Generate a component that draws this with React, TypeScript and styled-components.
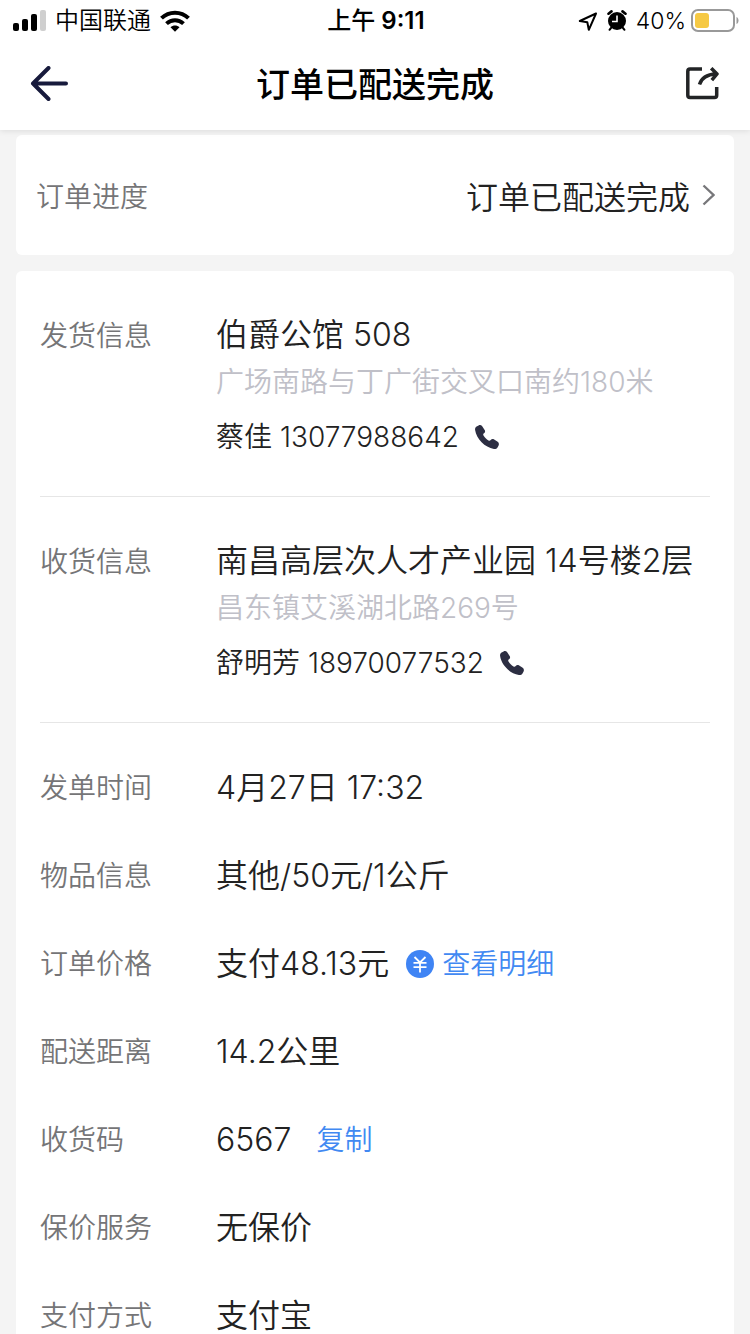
import React from "react";
import styled, { createGlobalStyle } from "styled-components";

const GlobalStyle = createGlobalStyle`
  * { box-sizing: border-box; }
  body {
    margin: 0;
    background: #f4f4f4;
    color: #222;
    font-family: Inter, "Noto Sans CJK SC", sans-serif;
    font-weight: 350;
  }
  button {
    margin: 0;
    padding: 0;
    border: 0;
    background: none;
    color: inherit;
    font: inherit;
    cursor: pointer;
  }
  svg { display: block; flex: none; }
  dl, dd, h1, p { margin: 0; }
`;

const Screen = styled.div`
  display: flex;
  flex-direction: column;
  height: 100vh;
`;

const Top = styled.header`
  flex: none;
  background: #fff;
  color: #000;
  box-shadow: 0 1px 6px rgba(0, 0, 0, 0.1);
  z-index: 1;
`;

const StatusBar = styled.div`
  display: grid;
  grid-template-columns: 1fr auto 1fr;
  align-items: center;
  height: 40px;
  padding: 0 11px 0 13px;
  font-size: 24px;
  line-height: 42px;
`;

const StatusGroup = styled.div<{ $end?: boolean }>`
  display: flex;
  align-items: center;
  justify-content: ${(p) => (p.$end ? "flex-end" : "flex-start")};
  gap: 9px;
`;

const Battery = styled.span`
  display: flex;
  align-items: center;
  gap: 5px;
`;

const Percent = styled.span`
  font-size: 23px;
`;

const Clock = styled.time`
  font-weight: 600;
`;

const Meridiem = styled.span`
  font-weight: 500;
`;

const NavBar = styled.nav`
  display: grid;
  grid-template-columns: 1fr auto 1fr;
  align-items: center;
  height: 90px;
  padding: 0 30px;
`;

const NavButton = styled.button<{ $end?: boolean }>`
  justify-self: ${(p) => (p.$end ? "end" : "start")};
  color: ${(p) => (p.$end ? "#222426" : "#171a3c")};
`;

const Title = styled.h1`
  font-size: 34px;
  font-weight: 500;
  line-height: 50px;
`;

const Content = styled.main`
  flex: 1;
  min-height: 0;
  overflow-y: auto;
  scrollbar-width: none;
  padding: 5px 16px 0;
`;

const Card = styled.section`
  margin-bottom: 16px;
  border-radius: 6px;
  background: #fff;
`;

const ProgressRow = styled.button`
  display: flex;
  align-items: center;
  justify-content: space-between;
  width: 100%;
  height: 120px;
  padding: 0 19px 0 20px;
`;

const ProgressValue = styled.span`
  display: flex;
  align-items: center;
  gap: 12px;
  font-size: 32px;
`;

const Label = styled.span`
  color: #757577;
  font-size: 28px;
`;

const Details = styled.dl`
  padding: 0 24px;
`;

const Party = styled.div`
  display: flex;
  padding: 40px 0 35px;
  border-bottom: 1px solid #e6e6e6;
`;

const Fields = styled.div`
  padding-top: 21px;
`;

const Field = styled.div`
  display: flex;
  align-items: center;
  height: 88px;
`;

const Term = styled.dt`
  flex: none;
  width: 176px;
  color: #757577;
  font-size: 28px;
  line-height: 50px;
`;

const Value = styled.dd`
  display: flex;
  align-items: center;
  font-size: 32px;
  line-height: 48px;
`;

const PartyInfo = styled.dd`
  flex: 1;
  font-size: 32px;
  line-height: 48px;
`;

const Street = styled.p`
  color: #c0c0c8;
  font-size: 28px;
  line-height: 46px;
`;

const Contact = styled.p`
  display: flex;
  align-items: center;
  gap: 16px;
  margin-top: 8px;
  font-size: 28px;
  line-height: 48px;
`;

const CallLink = styled.a`
  color: #2c2e42;
`;

const Action = styled.button<{ $gap: number }>`
  display: flex;
  align-items: center;
  gap: 8px;
  margin-left: ${(p) => p.$gap}px;
  color: #4189f2;
  font-size: 28px;
`;

const SignalIcon = () => (
  <svg width="33" height="22" viewBox="0 0 33 22" aria-hidden="true">
    <rect x="0" y="13" width="6" height="8" rx="2" />
    <rect x="9" y="9" width="6" height="12" rx="2" />
    <rect x="18" y="4" width="6" height="17" rx="2" />
    <rect x="27" y="0" width="6" height="21" rx="2" fill="#cfcfcf" />
  </svg>
);

const WifiIcon = () => (
  <svg width="30" height="22" viewBox="0 0 30 22" aria-hidden="true">
    <path d="M1.500 8.200C9 .8 21 .8 28.500 8.200" fill="none" stroke="#000" strokeWidth="4" />
    <path d="M6.500 13.600C11.500 9 18.500 9 23.500 13.600" fill="none" stroke="#000" strokeWidth="4" />
    <path d="M10.500 17.200C13 15 17 15 19.500 17.200L15 21.800Z" />
  </svg>
);

const LocationIcon = () => (
  <svg width="20" height="20" viewBox="0 0 20 20" aria-hidden="true">
    <path d="M18 2.500 1.800 10 9.300 11.200 10.800 18.800Z" fill="none" stroke="#000" strokeWidth="2" strokeLinejoin="round" />
  </svg>
);

const AlarmIcon = () => (
  <svg width="20" height="22" viewBox="0 0 20 22" aria-hidden="true">
    <circle cx="10" cy="11" r="9" />
    <path d="M1.500 3.700 4.500 1.400M18.500 3.700 15.500 1.400" fill="none" stroke="#000" strokeWidth="2.600" strokeLinecap="round" />
    <path d="M4 18 2.500 19.800M16 18 17.500 19.800" stroke="#000" strokeWidth="2" strokeLinecap="round" />
    <path d="M10 5.500V11.500H5" fill="none" stroke="#fff" strokeWidth="1.600" />
  </svg>
);

const BatteryIcon = () => (
  <svg width="48" height="24" viewBox="0 0 48 24" aria-hidden="true">
    <rect x="1" y="1" width="42" height="21" rx="6" fill="none" stroke="#999" strokeWidth="2" />
    <rect x="4" y="4" width="14" height="15" rx="3" fill="#f6c944" />
    <path d="M45.500 8C48.200 9 48.200 14 45.500 15Z" fill="#999" />
  </svg>
);

const BackIcon = () => (
  <svg width="40" height="38" viewBox="0 0 40 38" fill="none" stroke="currentColor" strokeWidth="4" strokeLinecap="round" strokeLinejoin="round" aria-hidden="true">
    <path d="M18.500 2 3 17.500 18.500 33M3 17.500H36" />
  </svg>
);

const ShareIcon = () => (
  <svg width="34" height="36" viewBox="0 0 34 36" fill="none" stroke="currentColor" strokeWidth="3.500" aria-hidden="true">
    <path d="M16 2H4Q1.800 2 1.800 4.200V28.300Q1.800 30.500 4 30.500H28.500Q30.700 30.500 30.700 28.300V20" />
    <path d="M13.500 17.500C15.500 10.500 20.500 7.500 30 7M25.200 1.200 31 7 25.800 13.200" strokeLinejoin="round" />
  </svg>
);

const ChevronIcon = () => (
  <svg width="13" height="22" viewBox="0 0 13 22" fill="none" stroke="#77777a" strokeWidth="2.400" aria-hidden="true">
    <path d="M1.500 1.500 11.500 11 1.500 20.500" />
  </svg>
);

const YuanIcon = () => (
  <svg width="28" height="28" viewBox="0 0 28 28" aria-hidden="true">
    <circle cx="14" cy="14" r="14" fill="#3f84f4" />
    <path d="M8.500 7 14 12.500 19.500 7M14 12.500V22.500M7.500 12.800H20.500M7.500 17.200H20.500" fill="none" stroke="#fff" strokeWidth="1.800" />
  </svg>
);

const HandsetIcon = () => (
  <svg width="24" height="24" viewBox="0 0 24 24" fill="currentColor" aria-hidden="true">
    <path d="M1.600 1.500 3.600.4C5-.2 6.300.1 7.200 1.300L9.800 5.200C10.400 6.400 10.100 7.500 9 8.300 8.100 9 8 9.600 8.500 10.500 9.800 12.600 11.400 14.200 13.500 15.500 14.400 16 15 15.900 15.700 15 16.500 13.900 17.600 13.600 18.800 14.200L22.700 16.800C23.900 17.700 24.200 19 23.600 20.400L22.500 22.400C21.700 23.700 20.400 24.100 18.900 23.900 9.900 22.600 1.400 14.100.1 5.100-.1 3.600.3 2.300 1.600 1.500Z" />
  </svg>
);

type PartyProps = { term: string; place: string; street: string; name: string; phone: string };

const PartyBlock = ({ term, place, street, name, phone }: PartyProps) => (
  <Party>
    <Term>{term}</Term>
    <PartyInfo>
      <p>{place}</p>
      <Street>{street}</Street>
      <Contact>
        {name} {phone}
        <CallLink href={`tel:${phone}`} aria-label={`拨打${name}`}>
          <HandsetIcon />
        </CallLink>
      </Contact>
    </PartyInfo>
  </Party>
);

type FieldProps = { term: string; value: string; children?: React.ReactNode };

const FieldRow = ({ term, value, children }: FieldProps) => (
  <Field>
    <Term>{term}</Term>
    <Value>
      {value}
      {children}
    </Value>
  </Field>
);

export default function App() {
  return (
    <Screen>
      <GlobalStyle />
      <Top>
        <StatusBar>
          <StatusGroup>
            <SignalIcon />
            <span>中国联通</span>
            <WifiIcon />
          </StatusGroup>
          <Clock>
            <Meridiem>上午</Meridiem> 9:11
          </Clock>
          <StatusGroup $end>
            <LocationIcon />
            <AlarmIcon />
            <Battery>
              <Percent>40%</Percent>
              <BatteryIcon />
            </Battery>
          </StatusGroup>
        </StatusBar>
        <NavBar>
          <NavButton aria-label="返回">
            <BackIcon />
          </NavButton>
          <Title>订单已配送完成</Title>
          <NavButton $end aria-label="分享">
            <ShareIcon />
          </NavButton>
        </NavBar>
      </Top>
      <Content>
        <Card>
          <ProgressRow>
            <Label>订单进度</Label>
            <ProgressValue>
              订单已配送完成
              <ChevronIcon />
            </ProgressValue>
          </ProgressRow>
        </Card>
        <Card>
          <Details>
            <PartyBlock
              term="发货信息"
              place="伯爵公馆 508"
              street="广场南路与丁广街交叉口南约180米"
              name="蔡佳"
              phone="13077988642"
            />
            <PartyBlock
              term="收货信息"
              place="南昌高层次人才产业园 14号楼2层"
              street="昌东镇艾溪湖北路269号"
              name="舒明芳"
              phone="18970077532"
            />
            <Fields>
              <FieldRow term="发单时间" value="4月27日 17:32" />
              <FieldRow term="物品信息" value="其他/50元/1公斤" />
              <FieldRow term="订单价格" value="支付48.13元">
                <Action $gap={17}>
                  <YuanIcon />
                  查看明细
                </Action>
              </FieldRow>
              <FieldRow term="配送距离" value="14.2公里" />
              <FieldRow term="收货码" value="6567">
                <Action $gap={25}>复制</Action>
              </FieldRow>
              <FieldRow term="保价服务" value="无保价" />
              <FieldRow term="支付方式" value="支付宝" />
            </Fields>
          </Details>
        </Card>
      </Content>
    </Screen>
  );
}
